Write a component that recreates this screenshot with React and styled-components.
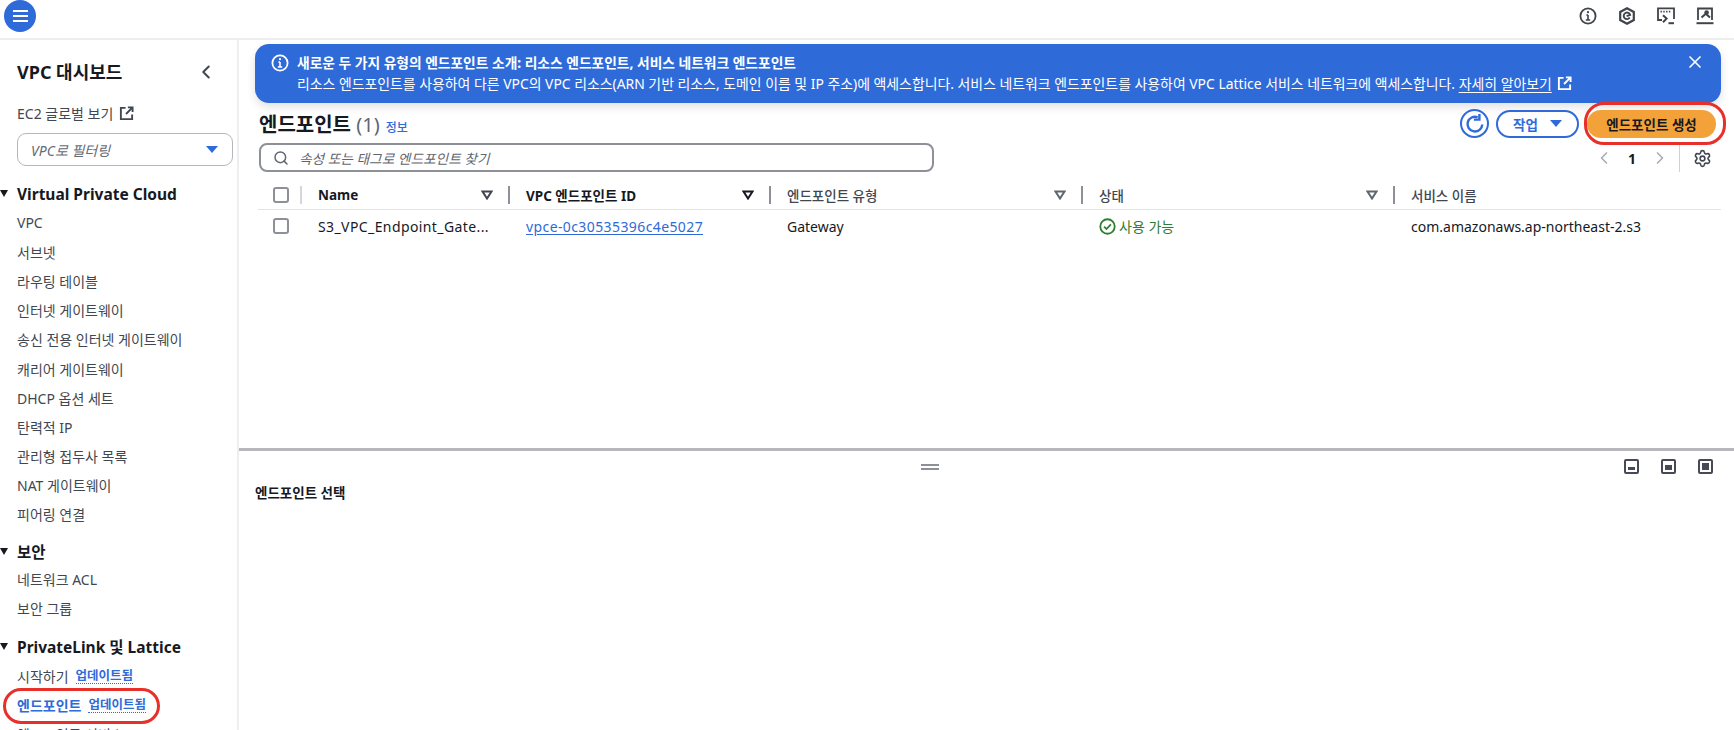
import React from "react";
import styled, { createGlobalStyle } from "styled-components";
import { ChevronLeft, ChevronRight, Search, Settings, X } from "lucide-react";

const GlobalStyle = createGlobalStyle`
  html, body {
    margin: 0;
    padding: 0;
    background: #ffffff;
    overflow: hidden;
  }
  * { box-sizing: border-box; }
`;

const Page = styled.div`
  width: 1734px;
  height: 730px;
  overflow: hidden;
  display: flex;
  flex-direction: column;
  font-family: "Noto Sans", "Noto Sans CJK KR", sans-serif;
  font-size: 14px;
  color: #16191f;
  background: #ffffff;
`;

const TopBar = styled.header`
  flex: 0 0 39px;
  display: flex;
  align-items: center;
  justify-content: space-between;
  padding: 0 20px 6px 4px;
  border-bottom: 2px solid #eeeeef;
`;

const MenuButton = styled.div`
  width: 32px;
  height: 32px;
  border-radius: 50%;
  background: #2e6bd9;
  display: flex;
  flex-direction: column;
  align-items: center;
  justify-content: center;
  gap: 3px;
  span {
    width: 15px;
    height: 2px;
    background: #ffffff;
  }
`;

const TopIcons = styled.div`
  display: flex;
  gap: 21px;
  color: #3f434b;
`;

const Body = styled.div`
  flex: 1;
  min-height: 0;
  display: flex;
`;

const Sidebar = styled.nav`
  flex: 0 0 239px;
  border-right: 2px solid #eeeeef;
  padding: 18px 0 0 17px;
  overflow: hidden;
`;

const SideTitleRow = styled.div`
  display: flex;
  align-items: center;
  justify-content: space-between;
  height: 28px;
  padding-right: 20px;
  color: #414750;
`;

const SideTitle = styled.h2`
  margin: 0;
  font-size: 18px;
  line-height: 28px;
  font-weight: 700;
  color: #16191f;
`;

const GlobalLink = styled.div`
  display: flex;
  align-items: center;
  gap: 6px;
  margin-top: 17px;
  height: 20px;
  color: #414750;
  font-size: 14px;
`;

const FilterSelect = styled.div`
  width: 216px;
  height: 33px;
  margin-top: 10px;
  padding: 0 14px 0 13px;
  display: flex;
  align-items: center;
  justify-content: space-between;
  border: 1px solid #b4b7bc;
  border-radius: 9px;
  font-size: 14px;
  font-style: italic;
  color: #656b75;
`;

const DownCaret = styled.span`
  width: 0;
  height: 0;
  border-left: ${(p) => p.$size}px solid transparent;
  border-right: ${(p) => p.$size}px solid transparent;
  border-top: ${(p) => p.$size + 1}px solid ${(p) => p.$color || "#2e6bd9"};
`;

const SectionHeading = styled.h3`
  position: relative;
  margin: ${(p) => p.$top}px 0 0;
  height: 22px;
  font-size: 15.5px;
  line-height: 22px;
  font-weight: 700;
  color: #16191f;
  &::before {
    content: "";
    position: absolute;
    left: -17px;
    top: 7px;
    border-left: 4.5px solid transparent;
    border-right: 4.5px solid transparent;
    border-top: 7px solid #16191f;
  }
`;

const NavList = styled.div`
  margin-top: ${(p) => p.$top}px;
  display: flex;
  flex-direction: column;
`;

const NavItem = styled.div`
  height: 29.2px;
  display: flex;
  align-items: center;
  gap: 7px;
  font-size: 14px;
  font-weight: ${(p) => (p.$active ? 700 : 400)};
  color: ${(p) => (p.$active ? "#2e6bd9" : "#414750")};
  white-space: nowrap;
`;

const UpdatedTag = styled.span`
  font-size: 12.5px;
  font-weight: 600;
  line-height: 15px;
  color: #2e6bd9;
  border-bottom: 1px dotted #2e6bd9;
`;

const Highlight = styled.div`
  position: absolute;
  border: 3px solid #e8302a;
  border-radius: 20px;
  pointer-events: none;
`;

const SideHighlight = styled(Highlight)`
  left: 3px;
  top: 688px;
  width: 157px;
  height: 36px;
`;

const CreateHighlight = styled(Highlight)`
  left: 1584px;
  top: 102px;
  width: 142px;
  height: 43px;
`;

const Main = styled.main`
  flex: 1;
  min-width: 0;
  display: flex;
  flex-direction: column;
`;

const TopPane = styled.section`
  flex: 0 0 411px;
  padding: 4px 13px 0 16px;
  border-bottom: 3px solid #b6b6bb;
`;

const Banner = styled.div`
  height: 59px;
  padding: 8px 16px 0 16px;
  display: flex;
  gap: 8px;
  border-radius: 14px;
  background: #2e6bd9;
  color: #ffffff;
  box-shadow: 0 4px 10px rgba(0, 0, 0, 0.12);
`;

const BannerIcon = styled.div`
  flex: 0 0 18px;
  margin-top: 2px;
`;

const BannerText = styled.div`
  flex: 1;
  min-width: 0;
  white-space: nowrap;
  font-size: 13.9px;
  line-height: 21px;
`;

const BannerTitle = styled.div`
  font-size: 13.75px;
  font-weight: 700;
`;

const BannerLink = styled.span`
  display: inline-flex;
  align-items: center;
  gap: 5px;
  u {
    text-underline-offset: 3px;
  }
`;

const HeaderRow = styled.div`
  display: flex;
  justify-content: space-between;
  padding: 6px 5px 0 4px;
`;

const HeaderLeft = styled.div`
  display: flex;
  flex-direction: column;
  gap: 4px;
  padding-top: 2px;
`;

const TitleLine = styled.div`
  display: flex;
  align-items: baseline;
  gap: 6px;
  height: 28px;
  white-space: nowrap;
`;

const PageTitle = styled.h1`
  margin: 0;
  font-size: 20px;
  line-height: 28px;
  font-weight: 700;
  span {
    font-weight: 400;
    color: #5f6670;
  }
`;

const InfoLink = styled.span`
  font-size: 12px;
  font-weight: 500;
  color: #2e6bd9;
`;

const SearchBox = styled.div`
  width: 675px;
  height: 29px;
  display: flex;
  align-items: center;
  gap: 10px;
  padding: 0 12px;
  border: 2px solid #8d9096;
  border-radius: 8px;
  font-size: 13.7px;
  font-style: italic;
  color: #5f6670;
`;

const HeaderRight = styled.div`
  display: flex;
  flex-direction: column;
  align-items: flex-end;
`;

const ActionRow = styled.div`
  display: flex;
  align-items: center;
  gap: 8px;
`;

const RefreshButton = styled.div`
  width: 29px;
  height: 29px;
  border-radius: 50%;
  border: 2px solid #2e6bd9;
  display: flex;
  align-items: center;
  justify-content: center;
  color: #2e6bd9;
  margin-right: -1px;
`;

const ActionsButton = styled.div`
  width: 83px;
  height: 28px;
  border: 2px solid #2e6bd9;
  border-radius: 14px;
  display: flex;
  align-items: center;
  justify-content: center;
  gap: 12px;
  font-size: 13.5px;
  font-weight: 700;
  color: #2e6bd9;
`;

const CreateButton = styled.div`
  width: 129px;
  height: 28px;
  border-radius: 14px;
  background: #f3a23a;
  display: flex;
  align-items: center;
  justify-content: center;
  font-size: 13.5px;
  font-weight: 700;
  color: #16191f;
`;

const PagerRow = styled.div`
  display: flex;
  align-items: center;
  margin-top: 6px;
  height: 28px;
  padding-right: 4px;
`;

const PageNumber = styled.span`
  width: 36px;
  text-align: center;
  font-size: 14px;
  font-weight: 700;
`;

const PagerDivider = styled.span`
  width: 1px;
  height: 28px;
  margin: 0 13px 0 9px;
  background: #cfd1d4;
`;

const Table = styled.div`
  margin: 8px 0 0 3px;
`;

const TableRow = styled.div`
  display: grid;
  grid-template-columns: 42px 208px 261px 312px 312px 1fr;
  align-items: center;
  height: ${(p) => p.$height}px;
  border-bottom: ${(p) => (p.$head ? "1px solid #e3e4e6" : "none")};
`;

const CheckCell = styled.div`
  padding-left: 15px;
`;

const Checkbox = styled.span`
  display: block;
  width: 16px;
  height: 16px;
  border: 2px solid #8d9096;
  border-radius: 3px;
`;

const HeadCell = styled.div`
  display: flex;
  align-items: center;
  justify-content: space-between;
  height: 18px;
  padding: 0 15px 0 16px;
  border-left: 2px solid ${(p) => (p.$light ? "#d5d6d9" : "#8d9096")};
  font-size: 13.5px;
  font-weight: ${(p) => (p.$bold ? 700 : 500)};
  color: ${(p) => (p.$bold ? "#16191f" : "#414750")};
  white-space: nowrap;
`;

const Cell = styled.div`
  padding-left: 18px;
  font-size: 14px;
  color: #16191f;
  white-space: nowrap;
  display: flex;
  align-items: center;
  gap: 3px;
  letter-spacing: ${(p) => (p.$wide ? "0.4px" : "0")};
`;

const IdLink = styled.span`
  color: #2e6bd9;
  text-decoration: underline;
  text-underline-offset: 2px;
`;

const Status = styled.span`
  display: inline-flex;
  align-items: center;
  gap: 3px;
  color: #2f7d32;
`;

const BottomPane = styled.section`
  position: relative;
  flex: 1;
  padding: 32px 0 0 16px;
`;

const Grip = styled.div`
  position: absolute;
  left: 682px;
  top: 13px;
  width: 18px;
  height: 6px;
  border-top: 2px solid #8d9096;
  border-bottom: 2px solid #8d9096;
`;

const SplitIcons = styled.div`
  position: absolute;
  right: 21px;
  top: 8px;
  display: flex;
  gap: 22px;
`;

const SplitButton = styled.div`
  width: 15px;
  height: 15px;
  padding: 2px;
  display: flex;
  align-items: flex-end;
  border: 2px solid #474a55;
  border-radius: 2px;
  span {
    display: block;
    width: 100%;
    height: ${(p) => p.$fill}%;
    background: #474a55;
  }
`;

const SelectLabel = styled.div`
  font-size: 13.5px;
  line-height: 20px;
  font-weight: 700;
  color: #16191f;
`;

const InfoCircle = ({ size = 18, color = "currentColor" }) => (
  <svg width={size} height={size} viewBox="0 0 18 18" fill="none" stroke={color} strokeWidth="1.8">
    <circle cx="9" cy="9" r="7.6" />
    <path d="M9 8v5M6.8 13h4.4M7.4 8H9" strokeWidth="1.6" />
    <circle cx="9" cy="5.2" r="1.1" fill={color} stroke="none" />
  </svg>
);

const ExternalIcon = ({ size = 15 }) => (
  <svg width={size} height={size} viewBox="0 0 16 16" fill="none" stroke="currentColor" strokeWidth="2">
    <path d="M7 2H2v12h12V9" />
    <path d="M9.5 1.5h5v5M14.5 1.5 7.5 8.5" />
  </svg>
);

const SortIcon = ({ color }) => (
  <svg width="12" height="10" viewBox="0 0 12 10" fill="none" stroke={color} strokeWidth="2">
    <path d="M1.5 1.5h9L6 8.5z" />
  </svg>
);

const HexIcon = () => (
  <svg width="18" height="18" viewBox="0 0 18 18" fill="none" stroke="currentColor" strokeWidth="2.2">
    <path d="M9 1.3 15.8 5v8L9 16.7 2.2 13V5z" />
    <path d="M11.8 10.6A3.3 3.3 0 1 1 12.2 8L8.6 9.2" strokeWidth="1.9" />
  </svg>
);

const ShellIcon = () => (
  <svg width="18" height="18" viewBox="0 0 18 18" fill="none" stroke="currentColor" strokeWidth="1.8">
    <path d="M5 13H1V1.3h16V12" />
    <path d="M3.5 4.6h1.4M6.3 4.6h1.4M9.1 4.6h1.4M11.9 4.6h1.4" strokeWidth="1.6" />
    <path d="m6 8.2 3.6 3.4L6 15.2" strokeWidth="2" />
    <path d="M11.5 16.2H17" strokeWidth="2" />
  </svg>
);

const DesktopToolIcon = () => (
  <svg width="18" height="18" viewBox="0 0 18 18" fill="none" stroke="currentColor" strokeWidth="1.8">
    <path d="M2 13V1.5h14V13" />
    <path d="M0.5 16.2h17" strokeWidth="2" />
    <path d="M5.5 10.5 9.5 7M9.5 6.5l4.5 4" strokeWidth="2.1" />
    <circle cx="10.6" cy="5.6" r="2.3" fill="currentColor" stroke="none" />
  </svg>
);

const RefreshIcon = () => (
  <svg width="22" height="22" viewBox="0 0 20 20" fill="none" stroke="currentColor" strokeWidth="2.2">
    <path d="M16.6 10.4A6.7 6.7 0 1 1 12.4 3.9" />
    <path d="M14 1v5H9" />
  </svg>
);

const StatusIcon = () => (
  <svg width="17" height="17" viewBox="0 0 16 16" fill="none" stroke="#2f7d32" strokeWidth="1.7">
    <circle cx="8" cy="8" r="6.8" />
    <path d="m4.8 8.2 2.2 2.2 4.2-4.4" />
  </svg>
);

const vpcItems = [
  "VPC",
  "서브넷",
  "라우팅 테이블",
  "인터넷 게이트웨이",
  "송신 전용 인터넷 게이트웨이",
  "캐리어 게이트웨이",
  "DHCP 옵션 세트",
  "탄력적 IP",
  "관리형 접두사 목록",
  "NAT 게이트웨이",
  "피어링 연결",
];

const columns = [
  { label: "Name", bold: true, sort: "#414750" },
  { label: "VPC 엔드포인트 ID", bold: true, sort: "#16191f" },
  { label: "엔드포인트 유형", sort: "#5f6670" },
  { label: "상태", sort: "#5f6670" },
  { label: "서비스 이름" },
];

export default function App() {
  return (
    <Page>
      <GlobalStyle />
      <TopBar>
        <MenuButton>
          <span />
          <span />
          <span />
        </MenuButton>
        <TopIcons>
          <InfoCircle />
          <HexIcon />
          <ShellIcon />
          <DesktopToolIcon />
        </TopIcons>
      </TopBar>
      <Body>
        <Sidebar>
          <SideTitleRow>
            <SideTitle>VPC 대시보드</SideTitle>
            <ChevronLeft size={22} strokeWidth={2.2} />
          </SideTitleRow>
          <GlobalLink>
            EC2 글로벌 보기 <ExternalIcon />
          </GlobalLink>
          <FilterSelect>
            VPC로 필터링
            <DownCaret $size={6} />
          </FilterSelect>
          <SectionHeading $top={17}>Virtual Private Cloud</SectionHeading>
          <NavList $top={3}>
            {vpcItems.map((item) => (
              <NavItem key={item}>{item}</NavItem>
            ))}
          </NavList>
          <SectionHeading $top={12}>보안</SectionHeading>
          <NavList $top={1}>
            <NavItem>네트워크 ACL</NavItem>
            <NavItem>보안 그룹</NavItem>
          </NavList>
          <SectionHeading $top={14}>PrivateLink 및 Lattice</SectionHeading>
          <NavList $top={3}>
            <NavItem>
              시작하기 <UpdatedTag>업데이트됨</UpdatedTag>
            </NavItem>
            <NavItem $active>
              엔드포인트 <UpdatedTag>업데이트됨</UpdatedTag>
            </NavItem>
            <NavItem>엔드포인트 서비스</NavItem>
          </NavList>
        </Sidebar>
        <Main>
          <TopPane>
            <Banner>
              <BannerIcon>
                <InfoCircle />
              </BannerIcon>
              <BannerText>
                <BannerTitle>
                  새로운 두 가지 유형의 엔드포인트 소개: 리소스 엔드포인트, 서비스 네트워크 엔드포인트
                </BannerTitle>
                리소스 엔드포인트를 사용하여 다른 VPC의 VPC 리소스(ARN 기반 리소스, 도메인 이름 및 IP 주소)에 액세스합니다. 서비스 네트워크 엔드포인트를 사용하여 VPC Lattice 서비스 네트워크에 액세스합니다.{" "}
                <BannerLink>
                  <u>자세히 알아보기</u>
                  <ExternalIcon />
                </BannerLink>
              </BannerText>
              <X size={20} />
            </Banner>
            <HeaderRow>
              <HeaderLeft>
                <TitleLine>
                  <PageTitle>
                    엔드포인트 <span>(1)</span>
                  </PageTitle>
                  <InfoLink>정보</InfoLink>
                </TitleLine>
                <SearchBox>
                  <Search size={16} color="#5f6670" strokeWidth={2.2} />
                  속성 또는 태그로 엔드포인트 찾기
                </SearchBox>
              </HeaderLeft>
              <HeaderRight>
                <ActionRow>
                  <RefreshButton>
                    <RefreshIcon />
                  </RefreshButton>
                  <ActionsButton>
                    작업
                    <DownCaret $size={6} />
                  </ActionsButton>
                  <CreateButton>엔드포인트 생성</CreateButton>
                </ActionRow>
                <PagerRow>
                  <ChevronLeft size={20} color="#a9adb4" />
                  <PageNumber>1</PageNumber>
                  <ChevronRight size={20} color="#a9adb4" />
                  <PagerDivider />
                  <Settings size={19} color="#414750" strokeWidth={2} />
                </PagerRow>
              </HeaderRight>
            </HeaderRow>
            <Table>
              <TableRow $head $height={30}>
                <CheckCell>
                  <Checkbox />
                </CheckCell>
                {columns.map((col, i) => (
                  <HeadCell key={col.label} $bold={col.bold} $light={i === 0}>
                    {col.label}
                    {col.sort && <SortIcon color={col.sort} />}
                  </HeadCell>
                ))}
              </TableRow>
              <TableRow $height={32}>
                <CheckCell>
                  <Checkbox />
                </CheckCell>
                <Cell $wide>S3_VPC_Endpoint_Gate...</Cell>
                <Cell $wide>
                  <IdLink>vpce-0c30535396c4e5027</IdLink>
                </Cell>
                <Cell>Gateway</Cell>
                <Cell>
                  <Status>
                    <StatusIcon />
                    사용 가능
                  </Status>
                </Cell>
                <Cell>com.amazonaws.ap-northeast-2.s3</Cell>
              </TableRow>
            </Table>
          </TopPane>
          <BottomPane>
            <Grip />
            <SplitIcons>
              <SplitButton $fill={45}>
                <span />
              </SplitButton>
              <SplitButton $fill={70}>
                <span />
              </SplitButton>
              <SplitButton $fill={100}>
                <span />
              </SplitButton>
            </SplitIcons>
            <SelectLabel>엔드포인트 선택</SelectLabel>
          </BottomPane>
        </Main>
      </Body>
      <SideHighlight />
      <CreateHighlight />
    </Page>
  );
}
